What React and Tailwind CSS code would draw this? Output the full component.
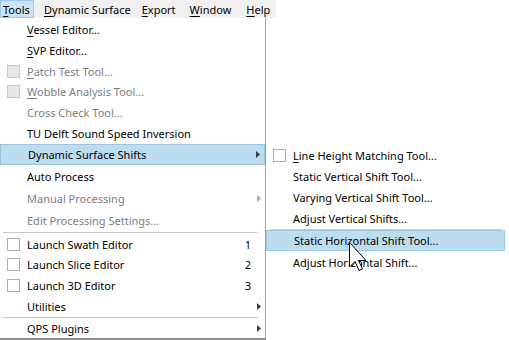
const mainItems = [
  { label: 'Vessel Editor...', mnemonic: true, h: 'h-[22px]' },
  { label: 'SVP Editor...', mnemonic: true, h: 'h-[21px]' },
  { label: 'Patch Test Tool...', mnemonic: true, h: 'h-[20px]', disabled: true, check: true },
  { label: 'Wobble Analysis Tool...', mnemonic: true, h: 'h-[21px]', disabled: true, check: true },
  { label: 'Cross Check Tool...', h: 'h-[21px]', disabled: true },
  { label: 'TU Delft Sound Speed Inversion', h: 'h-[21px]' },
  { label: 'Dynamic Surface Shifts', h: 'h-[21px]', active: true, sub: true },
  { label: 'Auto Process', h: 'h-[22px]' },
  { label: 'Manual Processing', h: 'h-[22px]', disabled: true, sub: true },
  { label: 'Edit Processing Settings...', h: 'h-[22px]', disabled: true },
  { separator: true, h: 'h-[3px]' },
  { label: 'Launch Swath Editor', h: 'h-[20px]', check: true, shortcut: '1' },
  { label: 'Launch Slice Editor', h: 'h-[21px]', check: true, shortcut: '2' },
  { label: 'Launch 3D Editor', h: 'h-[21px]', check: true, shortcut: '3' },
  { label: 'Utilities', h: 'h-[20px]', sub: true },
  { separator: true, h: 'h-[2px]' },
  { label: 'QPS Plugins', h: 'h-[20px]', sub: true },
];

const subItems = [
  { label: 'Line Height Matching Tool...', mnemonic: true, h: 'h-[21px]', check: true },
  { label: 'Static Vertical Shift Tool...', h: 'h-[21px]' },
  { label: 'Varying Vertical Shift Tool...', h: 'h-[21px]' },
  { label: 'Adjust Vertical Shifts...', h: 'h-[20px]' },
  { separator: true, h: 'h-[2px]' },
  { label: 'Static Horizontal Shift Tool...', h: 'h-[21px]', active: true },
  { label: 'Adjust Horizontal Shift...', h: 'h-[22px]' },
];

const menuBar = [
  { name: 'Tools', className: 'w-[34px] border border-[#99c9ef] bg-[#cce4f7] pl-[2px]' },
  { name: 'Dynamic Surface', className: 'ml-[10px]' },
  { name: 'Export', className: 'ml-[11px]' },
  { name: 'Window', className: 'ml-[14px]' },
  { name: 'Help', className: 'ml-[15px]' },
];

function Label({ text, mnemonic }) {
  if (!mnemonic) return <span>{text}</span>;
  return (
    <span>
      <span className="underline underline-offset-[2px]">{text[0]}</span>
      {text.slice(1)}
    </span>
  );
}

function Checkbox({ disabled }) {
  return (
    <span
      className={
        disabled
          ? 'block h-[13px] w-[13px] border border-[#c6c6c6] bg-[#e8e8e8]'
          : 'block h-[13px] w-[13px] border border-[#adadad] bg-white'
      }
    />
  );
}

function Arrow({ disabled }) {
  return (
    <svg width="4" height="7" viewBox="0 0 4 7" className="ml-[6px]">
      <polygon points="0,0 4,3.5 0,7" fill={disabled ? '#a8a8a8' : '#3c3c3c'} />
    </svg>
  );
}

function MenuRow({ item, withSide }) {
  if (item.separator) {
    return (
      <div className={`${item.h} flex items-center ${withSide ? 'pl-[3px] pr-[7px]' : 'pl-[4px] pr-[4px]'}`}>
        <div className="h-px w-full bg-[#c8c8c8]" />
      </div>
    );
  }
  return (
    <div
      className={`${item.h} flex items-center pl-[7px] ${
        item.active ? 'border border-[#9cc5de] bg-[#bcdcf0] pl-[6px]' : ''
      } ${item.disabled ? 'text-[#7d7d7d]' : 'text-black'}`}
    >
      <div className="w-[20px]">{item.check ? <Checkbox disabled={item.disabled} /> : null}</div>
      <div className="flex-1 whitespace-nowrap">
        <Label text={item.label} mnemonic={item.mnemonic} />
      </div>
      {withSide ? (
        <>
          <div className="w-[20px] text-right">{item.shortcut}</div>
          <div className="w-[14px]">{item.sub ? <Arrow disabled={item.disabled} /> : null}</div>
        </>
      ) : null}
    </div>
  );
}

export default function App() {
  return (
    <div className="relative h-[340px] w-[509px] overflow-hidden bg-white font-['Noto_Sans',sans-serif] text-[11px] leading-none">
      <div className="flex h-[18px] w-[276px] items-stretch bg-[#f0f0f0] text-black">
        {menuBar.map((entry) => (
          <div key={entry.name} className={`flex shrink-0 items-center whitespace-nowrap ${entry.className}`}>
            <Label text={entry.name} mnemonic />
          </div>
        ))}
      </div>

      <div className="w-[266px] border-r border-b-2 border-r-[#a0a0a0] border-b-[#8c8c8c] bg-white">
        {mainItems.map((item, index) => (
          <MenuRow key={index} item={item} withSide />
        ))}
      </div>

      <div className="absolute left-[266px] top-[144px] w-[241px] bg-white pt-[1px] pr-[2px]">
        {subItems.map((item, index) => (
          <MenuRow key={index} item={item} />
        ))}
      </div>

      <svg className="absolute left-[349px] top-[242px]" width="19" height="30" viewBox="0 0 19 30">
        <polygon
          points="0.5,0.5 0.5,25 6,19.5 10,28.5 13.5,27 9.5,18.5 17,18.5"
          fill="white"
          stroke="black"
          strokeWidth="1"
          strokeLinejoin="miter"
        />
      </svg>
    </div>
  );
}
